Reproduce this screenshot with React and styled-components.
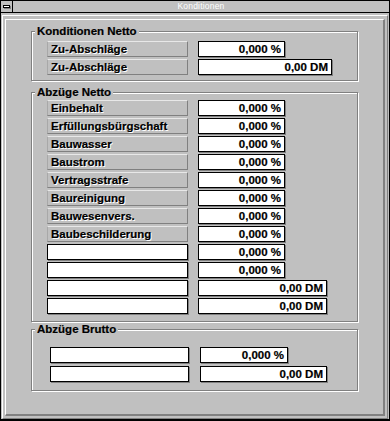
import React from 'react';
import styled, { createGlobalStyle } from 'styled-components';

const GlobalStyle = createGlobalStyle`
  html, body {
    margin: 0;
    padding: 0;
    background: #c0c0c0;
  }
  body {
    font-family: "Liberation Sans", Arial, sans-serif;
  }
`;

const Window = styled.div`
  width: 390px;
  height: 421px;
  box-sizing: border-box;
  display: flex;
  flex-direction: column;
  background: #c0c0c0;
  border: 1px solid #000;
  border-bottom-width: 2px;
`;

const TitleBar = styled.div`
  height: 11px;
  display: flex;
  border-bottom: 1px solid #000;
`;

const SysBox = styled.div`
  width: 11px;
  display: flex;
  align-items: center;
  justify-content: center;
  border-right: 1px solid #000;
`;

const SysGlyph = styled.div`
  width: 5px;
  height: 1px;
  border: 1px solid #000;
  background: #fff;
  box-shadow: 1px 1px 0 #808080;
`;

const Caption = styled.div`
  flex: 1;
  text-align: center;
  color: #fff;
  font-size: 8.5px;
  line-height: 11px;
  letter-spacing: 0.2px;
`;

const Frame = styled.div`
  flex: 1;
  display: flex;
  padding: 2px 1px 0 1px;
`;

const Outer = styled.div`
  flex: 1;
  display: flex;
  border: 1px solid;
  border-color: #fff #808080 #808080 #fff;
  padding: 3px 2px 2px 2px;
`;

const Panel = styled.div`
  flex: 1;
  display: flex;
  flex-direction: column;
  border-style: solid;
  border-width: 1px 2px 2px 1px;
  border-color: #fff #808080 #808080 #fff;
  padding: 0 25px;
`;

const Group = styled.div`
  margin-top: ${(p) => p.$mt}px;
  border: 1px solid #808080;
  box-shadow: inset 1px 1px 0 #fff, 1px 1px 0 #fff;
`;

const Legend = styled.div`
  width: fit-content;
  margin: -7px 0 0 3px;
  padding: 0 2px;
  background: #c0c0c0;
  font-size: 11.5px;
  font-weight: bold;
  line-height: 13px;
  color: #000;
  white-space: nowrap;
  -webkit-text-stroke: 0.2px #000;
`;

const Rows = styled.div`
  display: grid;
  row-gap: ${(p) => p.$gap}px;
  padding: ${(p) => p.$pt}px 0 ${(p) => p.$pb}px ${(p) => p.$pl}px;
`;

const Row = styled.div`
  display: grid;
  grid-template-columns: ${(p) => p.$labelW}px auto;
  column-gap: ${(p) => p.$colGap}px;
  justify-content: start;
`;

const Field = styled.div`
  height: 16px;
  box-sizing: border-box;
  font-size: 11.5px;
  font-weight: bold;
  line-height: 14px;
  color: #000;
  white-space: nowrap;
  overflow: hidden;
  -webkit-text-stroke: 0.2px #000;
`;

const LabelBox = styled(Field)`
  background: #c0c0c0;
  border: 1px solid;
  border-color: #e8e8e8 #808080 #808080 #a8a8a8;
  padding-left: 3px;
  text-shadow: 1px 1px 0 #fff;
`;

const EditBox = styled(Field)`
  background: #fff;
  border: 1px solid #000;
  box-shadow: 1px 1px 0 #808080;
  padding-right: 3px;
  text-align: right;
  width: ${(p) => (p.$w ? `${p.$w}px` : 'auto')};
`;

const groups = [
  {
    title: 'Konditionen Netto',
    mt: 11, pt: 3, pb: 5, pl: 15, gap: 2, labelW: 141, colGap: 10,
    rows: [
      { label: 'Zu-Abschläge', value: '0,000 %', w: 87 },
      { label: 'Zu-Abschläge', value: '0,00 DM', w: 134 },
    ],
  },
  {
    title: 'Abzüge Netto',
    mt: 11, pt: 1, pb: 7, pl: 15, gap: 2, labelW: 141, colGap: 10,
    rows: [
      { label: 'Einbehalt', value: '0,000 %', w: 87 },
      { label: 'Erfüllungsbürgschaft', value: '0,000 %', w: 87 },
      { label: 'Bauwasser', value: '0,000 %', w: 87 },
      { label: 'Baustrom', value: '0,000 %', w: 87 },
      { label: 'Vertragsstrafe', value: '0,000 %', w: 87 },
      { label: 'Baureinigung', value: '0,000 %', w: 87 },
      { label: 'Bauwesenvers.', value: '0,000 %', w: 87 },
      { label: 'Baubeschilderung', value: '0,000 %', w: 87 },
      { label: null, value: '0,000 %', w: 87 },
      { label: null, value: '0,000 %', w: 87 },
      { label: null, value: '0,00 DM', w: 129 },
      { label: null, value: '0,00 DM', w: 129 },
    ],
  },
  {
    title: 'Abzüge Brutto',
    mt: 7, pt: 11, pb: 8, pl: 18, gap: 3, labelW: 139, colGap: 11,
    rows: [
      { label: null, value: '0,000 %', w: 88 },
      { label: null, value: '0,00 DM', w: 127 },
    ],
  },
];

export default function App() {
  return (
    <>
      <GlobalStyle />
      <Window>
        <TitleBar>
          <SysBox>
            <SysGlyph />
          </SysBox>
          <Caption>Konditionen</Caption>
        </TitleBar>
        <Frame>
          <Outer>
            <Panel>
              {groups.map((g) => (
                <Group key={g.title} $mt={g.mt}>
                  <Legend>{g.title}</Legend>
                  <Rows $pt={g.pt} $pb={g.pb} $pl={g.pl} $gap={g.gap}>
                    {g.rows.map((r, i) => (
                      <Row key={i} $labelW={g.labelW} $colGap={g.colGap}>
                        {r.label ? <LabelBox>{r.label}</LabelBox> : <EditBox />}
                        <EditBox $w={r.w}>{r.value}</EditBox>
                      </Row>
                    ))}
                  </Rows>
                </Group>
              ))}
            </Panel>
          </Outer>
        </Frame>
      </Window>
    </>
  );
}
